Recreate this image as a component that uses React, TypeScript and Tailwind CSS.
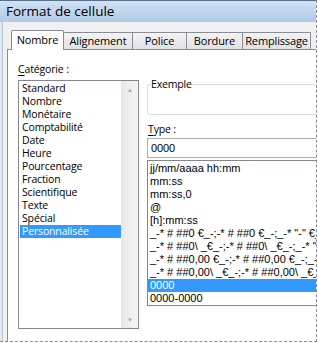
import React from 'react';

const ui = { fontFamily: '"Open Sans", "Liberation Sans", sans-serif' };
const arial = { fontFamily: '"Liberation Sans", Arial, sans-serif' };

const categories = [
  'Standard',
  'Nombre',
  'Monétaire',
  'Comptabilité',
  'Date',
  'Heure',
  'Pourcentage',
  'Fraction',
  'Scientifique',
  'Texte',
  'Spécial',
  'Personnalisée',
];

const formats = [
  'jj/mm/aaaa hh:mm',
  'mm:ss',
  'mm:ss,0',
  '@',
  '[h]:mm:ss',
  '_-* # ##0 €_-;-* # ##0 €_-;_-* "-" €_-;_-@_-',
  '_-* # ##0\\ _€_-;-* # ##0\\ _€_-;_-* "-"\\ _€_-;_-@_-',
  '_-* # ##0,00 €_-;-* # ##0,00 €_-;_-* "-"?? €_-;_-@_-',
  '_-* # ##0,00\\ _€_-;-* # ##0,00\\ _€_-;_-* "-"??\\ _€_-;_-@_-',
  '0000',
  '0000-0000',
];

const tabs = ['Nombre', 'Alignement', 'Police', 'Bordure', 'Remplissage'];
const tabWidths = [53, 69, 54, 56, 68];

export default function App() {
  return (
    <div className="w-[318px] h-[343px] bg-white overflow-hidden text-black" style={ui}>
      <div className="w-[317px] h-[342px] border-r border-b border-dashed border-[#8c8c8c] overflow-hidden flex flex-col">
        {/* barre de titre */}
        <div className="h-[22px] shrink-0 border-t border-[#58708e] bg-gradient-to-b from-[#d3e2f4] to-[#afc8e7] flex items-center pl-[6px] text-[13.5px]">
          Format de cellule
        </div>

        <div className="flex flex-1 bg-[#f0f0f0]">
          <div className="w-[3px] shrink-0 bg-[#dfe8f3] border-r border-[#b6c3d3]" />
          <div className="flex flex-col flex-1">
            {/* onglets */}
            <div className="flex items-end pl-[8px] pt-[8px] h-[27px] shrink-0 text-[11px] tracking-[-0.15px]">
              {tabs.map((t, i) =>
                i === 0 ? (
                  <div
                    key={t}
                    className="relative z-10 h-[20px] -mb-px bg-white border border-b-0 border-[#898c95] rounded-t-[2px] flex items-center justify-center"
                    style={{ width: tabWidths[i] }}
                  >
                    {t}
                  </div>
                ) : (
                  <div
                    key={t}
                    className="h-[17px] bg-gradient-to-b from-[#f3f3f3] to-[#e2e2e2] border border-l-0 border-b-0 border-[#898c95] flex items-center justify-center"
                    style={{ width: tabWidths[i] }}
                  >
                    {t}
                  </div>
                )
              )}
            </div>

            {/* panneau */}
            <div className="flex-1 ml-[4px] bg-white border-t border-l border-[#898c95] flex pl-[10px] text-[10.5px] tracking-[-0.15px]">
              {/* colonne gauche */}
              <div className="flex flex-col w-[121px] shrink-0">
                <div className="mt-[11px] h-[16px] leading-[16px]">
                  <span className="underline underline-offset-2">C</span>atégorie :
                </div>
                <div className="mt-[3px] h-[249px] border border-[#828790] flex">
                  <div className="flex-1 pt-[1px] pl-[1px]">
                    {categories.map((c) => (
                      <div
                        key={c}
                        className={`h-[13px] leading-[13px] pl-[2px] ${
                          c === 'Personnalisée' ? 'bg-[#3399ff] text-white' : ''
                        }`}
                      >
                        {c}
                      </div>
                    ))}
                  </div>
                  <div className="w-[17px] bg-gradient-to-r from-[#e9e9e9] to-[#f5f5f5] border-l border-[#e6e6e6] flex flex-col justify-between items-center pt-[6px] pb-[5px] text-[#a8a8a8] text-[6px] leading-none">
                    <span>▲</span>
                    <span>▼</span>
                  </div>
                </div>
              </div>

              {/* colonne droite */}
              <div className="flex flex-col flex-1 ml-[8px] min-w-0">
                <fieldset className="mt-[27px] h-[38px] border border-[#d5dfe5] rounded-[3px] border-r-0 rounded-r-none">
                  <legend className="ml-[3px] px-0 leading-[14px]">Exemple</legend>
                </fieldset>
                <div className="mt-[6px] h-[16px] leading-[16px] pl-[1px]">
                  <span className="underline underline-offset-2">T</span>ype :
                </div>
                <div className="mt-[1px] h-[20px] border border-r-0 border-[#abadb3] flex items-center pl-[3px] text-[11px]" style={arial}>
                  0000
                </div>
                <div className="mt-[2px] h-[146px] border border-r-0 border-[#828790] pt-[1px] overflow-hidden tracking-normal" style={arial}>
                  {formats.map((f) => (
                    <div
                      key={f}
                      className={`h-[13px] leading-[13px] text-[11px] pl-[2px] whitespace-nowrap ${
                        f === '0000' ? 'bg-[#3399ff] text-white' : ''
                      }`}
                    >
                      {f}
                    </div>
                  ))}
                </div>
              </div>
            </div>
          </div>
        </div>
      </div>
    </div>
  );
}
